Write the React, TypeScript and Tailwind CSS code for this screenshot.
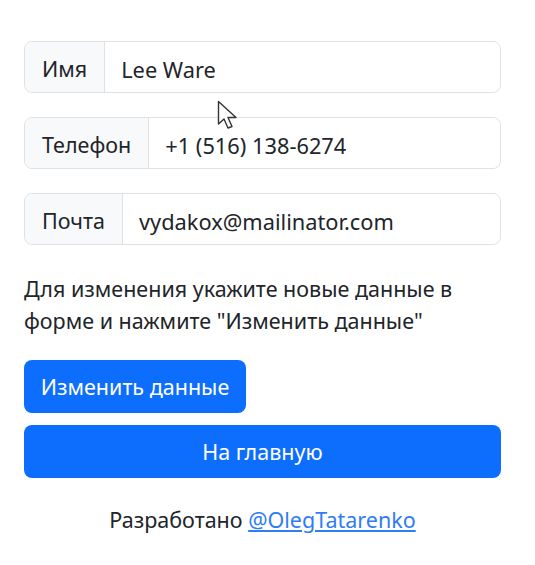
const fields = [
  { label: 'Имя', value: 'Lee Ware' },
  { label: 'Телефон', value: '+1 (516) 138-6274' },
  { label: 'Почта', value: 'vydakox@mailinator.com' },
];

export default function App() {
  return (
    <div
      className="relative min-h-[565px] bg-white pt-[41px] pl-6 text-[21.5px] text-[#212529]"
      style={{ fontFamily: '"Noto Sans", "Open Sans", sans-serif' }}
    >
      <div className="flex w-[477px] flex-col">
        {fields.map((f) => (
          <div key={f.label} className="mb-6 flex h-[52px] rounded-lg border border-[#dee2e6]">
            <span className="flex items-center rounded-l-lg border-r border-[#dee2e6] bg-[#f8f9fa] px-[17px] pt-[5px]">
              {f.label}
            </span>
            <input
              readOnly
              value={f.value}
              className="min-w-0 flex-1 rounded-r-lg bg-white px-[16px] pt-[6px] text-[21.8px] outline-none"
            />
          </div>
        ))}

        <p className="mt-[4px] mb-[23px] leading-[32px]">
          Для изменения укажите новые данные в форме и нажмите "Изменить данные"
        </p>

        <button className="h-[53px] w-[222px] rounded-lg bg-[#0d6efd] pt-[2px] text-white">
          Изменить данные
        </button>
        <button className="mt-3 h-[53px] w-full rounded-lg bg-[#0d6efd] pt-[2px] text-white">
          На главную
        </button>

        <p className="mt-[26px] text-center leading-[32px]">
          Разработано{' '}
          <a href="#" className="text-[#2f7cf6] underline">
            @OlegTatarenko
          </a>
        </p>
      </div>

      {/* mouse cursor */}
      <svg
        className="absolute left-[217px] top-[100px]"
        width="24"
        height="32"
        viewBox="0 0 24 32"
      >
        <path
          d="M1.5 1.5 L1.5 24 L7 19 L11 28 L15 26.5 L11 17.5 L19 17.5 Z"
          fill="white"
          stroke="#333"
          strokeWidth="1.4"
          strokeLinejoin="round"
        />
      </svg>
    </div>
  );
}
